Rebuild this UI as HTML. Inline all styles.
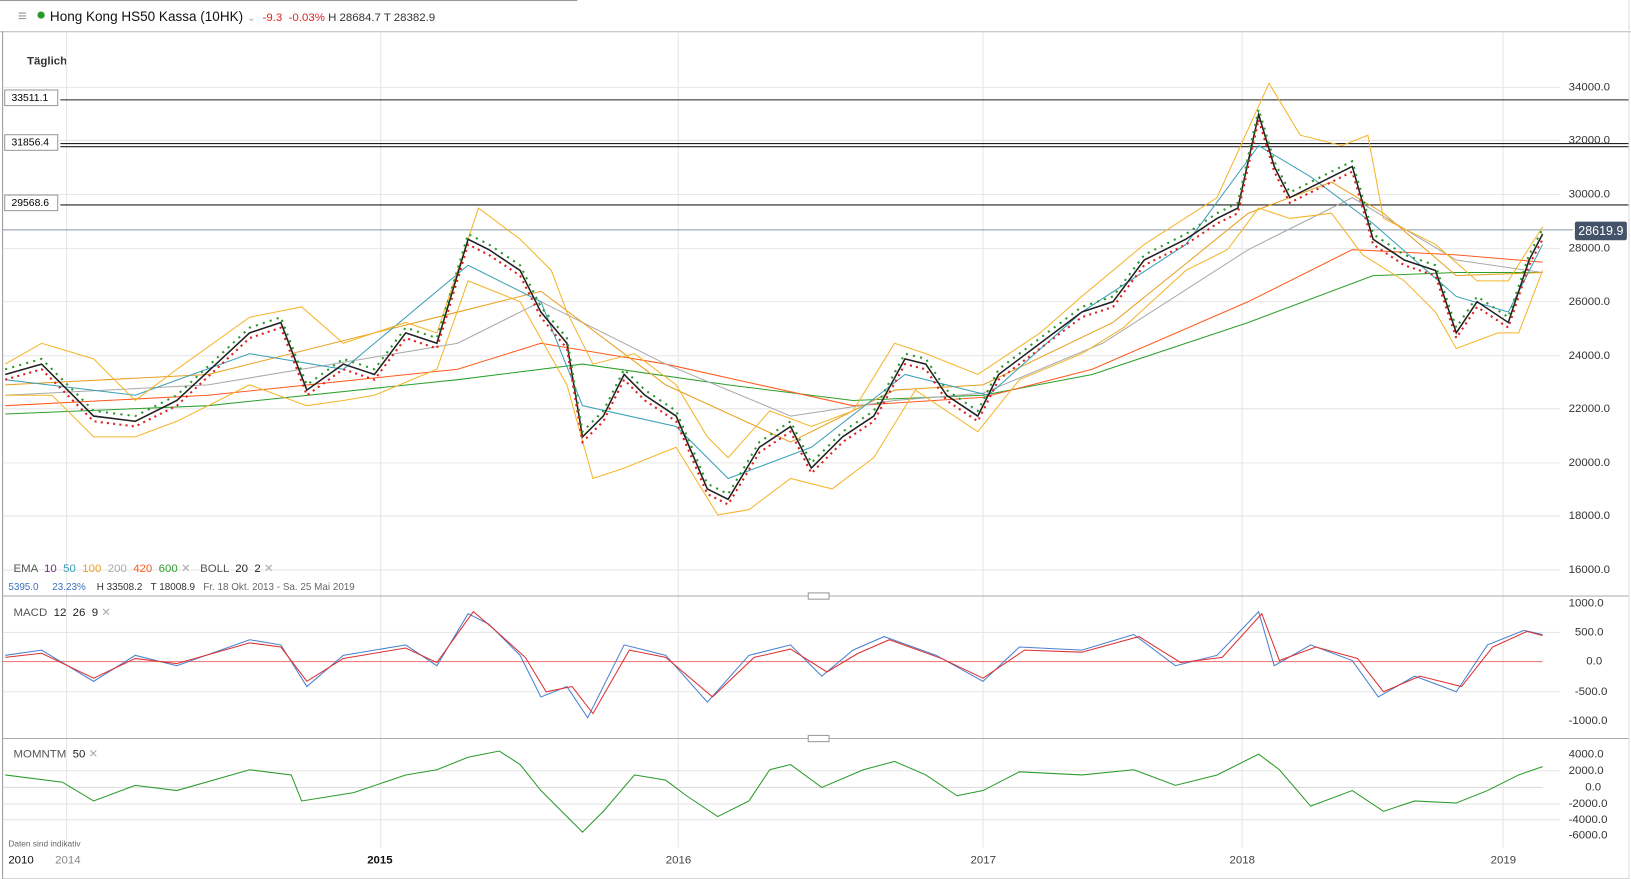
<!DOCTYPE html><html><head><style>
body{margin:0;width:1631px;height:879px;background:#fff;font-family:"Liberation Sans",sans-serif;overflow:hidden;position:relative}
#w{position:absolute;left:0;top:0;width:1568px;height:845px;transform:scale(1.0402);transform-origin:0 0}
.t{position:absolute;white-space:nowrap}
.ax{position:absolute;left:1508px;font-size:11px;color:#333}
.lbl{position:absolute;left:4px;width:52px;height:16px;border:1px solid #999;background:#fff;font-size:10px;line-height:16px;padding-left:6px;box-sizing:border-box}
</style></head><body><div id="w">
<div style="position:absolute;left:0;top:0;width:555px;height:1px;background:#999"></div>
<div style="position:absolute;left:0;top:30px;width:1568px;height:1px;background:#bbb"></div>
<div style="position:absolute;left:2px;top:30px;width:1px;height:815px;background:#999"></div>
<div class="t" style="left:17px;top:7px;font-size:15px;color:#999">≡</div>
<div class="t" style="left:36px;top:11px;width:7px;height:7px;border-radius:50%;background:#2a9a2a"></div>
<div class="t" style="left:48px;top:8px;font-size:13px;color:#111">Hong Kong HS50 Kassa (10HK) <span style="color:#aaa;font-size:10px">⌄</span> <span style="color:#d22;font-size:11px">&nbsp;-9.3 &nbsp;-0.03%</span><span style="font-size:11px;color:#333"> H 28684.7 T 28382.9</span></div>
<div class="t" style="left:26px;top:53px;font-size:11px;font-weight:bold;color:#333">Täglich</div>
<svg width="1568" height="845" style="position:absolute;left:0;top:0">
<g stroke="#e6e6e6" stroke-width="1">
<line x1="64" y1="31" x2="64" y2="815"/><line x1="366" y1="31" x2="366" y2="815"/><line x1="652" y1="31" x2="652" y2="815"/><line x1="945" y1="31" x2="945" y2="815"/><line x1="1194" y1="31" x2="1194" y2="815"/><line x1="1445" y1="31" x2="1445" y2="815"/>
<line x1="3" y1="84" x2="1500" y2="84"/><line x1="3" y1="135" x2="1500" y2="135"/><line x1="3" y1="187" x2="1500" y2="187"/><line x1="3" y1="239" x2="1500" y2="239"/><line x1="3" y1="290" x2="1500" y2="290"/><line x1="3" y1="342" x2="1500" y2="342"/><line x1="3" y1="393" x2="1500" y2="393"/><line x1="3" y1="445" x2="1500" y2="445"/><line x1="3" y1="496" x2="1500" y2="496"/><line x1="3" y1="548" x2="1500" y2="548"/>
<line x1="3" y1="608" x2="1500" y2="608"/><line x1="3" y1="665" x2="1500" y2="665"/><line x1="3" y1="741" x2="1500" y2="741"/><line x1="3" y1="773" x2="1500" y2="773"/><line x1="3" y1="788" x2="1500" y2="788"/>
</g>
<g stroke="#222" stroke-width="1"><line x1="58" y1="96" x2="1566" y2="96"/><line x1="58" y1="138" x2="1566" y2="138"/><line x1="58" y1="141" x2="1566" y2="141"/><line x1="58" y1="197" x2="1566" y2="197"/></g>
<line x1="3" y1="221" x2="1512" y2="221" stroke="#8a96a6"/>
<line x1="3" y1="573" x2="1566" y2="573" stroke="#aaa"/><line x1="3" y1="710" x2="1566" y2="710" stroke="#aaa"/>
<line x1="3" y1="845" x2="1566" y2="845" stroke="#aaa"/>
<line x1="1566" y1="0" x2="1566" y2="845" stroke="#ddd"/>
<rect x="777" y="570" width="20" height="6" fill="#fff" stroke="#999"/><rect x="777" y="707" width="20" height="6" fill="#fff" stroke="#999"/>
<polyline fill="none" stroke="#2ca02c" stroke-width="1" points="5,398 200,390 440,365 560,350 700,370 820,385 945,380 1050,360 1200,310 1320,265 1400,262 1483,262"/>
<polyline fill="none" stroke="#ff5a1e" stroke-width="1" points="5,390 200,380 440,355 520,330 640,350 820,390 945,382 1050,355 1200,290 1300,240 1400,245 1483,252"/>
<polyline fill="none" stroke="#aaa" stroke-width="1" points="5,380 200,370 440,330 520,290 640,350 760,400 860,385 945,378 1060,330 1200,240 1300,190 1400,250 1483,262"/>
<polyline fill="none" stroke="#e8a020" stroke-width="1" points="5,370 200,360 440,300 520,280 640,370 760,425 860,375 945,370 1070,310 1200,205 1280,175 1330,205 1400,265 1483,262"/>
<polyline fill="none" stroke="#3aa0b8" stroke-width="1" points="5,365 130,380 240,340 330,355 450,255 520,290 560,390 650,410 700,460 780,430 870,360 950,380 1040,300 1140,235 1210,140 1260,170 1320,215 1400,285 1450,300 1483,235"/>
<polyline fill="none" stroke="#f5b52a" stroke-width="1" points="5,350 40,330 90,345 130,385 170,355 240,305 290,295 330,330 390,310 420,320 460,200 500,230 530,260 545,300 570,350 610,340 650,370 680,420 700,440 740,395 780,410 820,395 860,330 890,340 940,360 1000,320 1040,285 1100,235 1170,190 1220,80 1250,130 1290,140 1315,130 1330,210 1380,235 1420,270 1450,270 1483,218"/>
<polyline fill="none" stroke="#f5b52a" stroke-width="1" points="5,380 50,380 90,420 130,420 170,405 240,370 295,390 330,385 360,380 420,355 450,270 500,290 545,370 570,460 600,450 650,430 690,495 720,490 760,460 800,470 840,440 880,375 940,415 980,365 1040,340 1080,315 1140,260 1180,240 1210,200 1240,210 1280,205 1310,245 1350,270 1380,300 1400,335 1440,320 1460,320 1483,260"/>
<polyline fill="none" stroke="#222" stroke-width="1.5" points="5,360 40,350 90,400 130,405 170,385 240,320 270,310 295,375 330,350 360,360 390,320 420,330 450,230 470,240 500,260 520,300 545,330 560,420 580,400 600,360 620,380 650,400 680,470 700,480 730,430 760,410 780,450 810,420 840,400 870,345 890,350 910,380 940,400 960,360 1000,330 1040,300 1070,290 1100,250 1140,230 1170,210 1190,200 1210,110 1225,160 1240,190 1270,175 1300,160 1320,230 1350,250 1380,260 1400,320 1420,290 1450,310 1470,250 1483,225"/>
<polyline fill="none" stroke="#e02020" stroke-width="2" stroke-dasharray="2,4" points="5,365 40,355 90,405 130,410 170,390 240,325 270,315 295,380 330,355 360,365 390,325 420,335 450,235 470,245 500,265 520,305 545,335 560,425 580,405 600,365 620,385 650,405 680,475 700,485 730,435 760,415 780,455 810,425 840,405 870,350 890,355 910,385 940,405 960,365 1000,335 1040,305 1070,295 1100,255 1140,235 1170,215 1190,205 1210,115 1225,165 1240,195 1270,180 1300,165 1320,235 1350,255 1380,265 1400,325 1420,295 1450,315 1470,255 1483,230"/>
<polyline fill="none" stroke="#2a9a2a" stroke-width="2" stroke-dasharray="2,5" points="5,355 40,345 90,395 130,400 170,380 240,315 270,305 295,370 330,345 360,355 390,315 420,325 450,225 470,235 500,255 520,295 545,325 560,415 580,395 600,355 620,375 650,395 680,465 700,475 730,425 760,405 780,445 810,415 840,395 870,340 890,345 910,375 940,395 960,355 1000,325 1040,295 1070,285 1100,245 1140,225 1170,205 1190,195 1210,105 1225,155 1240,185 1270,170 1300,155 1320,225 1350,245 1380,255 1400,315 1420,285 1450,305 1470,245 1483,220"/>
<line x1="3" y1="636" x2="1483" y2="636" stroke="#f08080"/>
<polyline fill="none" stroke="#4a80d0" stroke-width="1" points="5,630 40,625 90,655 130,630 170,640 240,615 270,620 295,660 330,630 390,620 420,640 450,590 470,600 500,630 520,670 545,660 565,690 600,620 640,630 680,675 720,630 760,620 790,650 820,625 850,612 900,630 945,655 980,622 1040,625 1090,610 1130,640 1170,630 1210,588 1225,640 1260,620 1300,635 1325,670 1360,650 1400,665 1430,620 1465,606 1483,610"/>
<polyline fill="none" stroke="#e03030" stroke-width="1" points="5,632 40,628 90,652 130,633 170,638 240,618 270,622 295,655 330,633 390,623 420,637 455,588 475,605 505,632 525,665 550,660 570,686 605,625 640,632 685,670 725,632 760,624 795,646 825,628 855,615 905,633 945,652 985,625 1040,627 1095,612 1135,637 1175,632 1213,590 1230,635 1265,622 1305,633 1330,665 1365,650 1405,660 1435,622 1468,607 1483,611"/>
<line x1="3" y1="757" x2="1483" y2="757" stroke="#ddd"/>
<polyline fill="none" stroke="#2a9a2a" stroke-width="1" points="5,745 60,752 90,770 130,755 170,760 240,740 280,745 290,770 340,762 390,745 420,740 450,728 480,722 500,735 520,760 540,780 560,800 580,780 610,745 640,750 660,765 690,785 720,770 740,740 760,735 790,757 830,740 860,732 890,745 920,765 945,760 980,742 1040,745 1090,740 1130,755 1170,745 1210,725 1230,740 1260,775 1300,760 1330,780 1360,770 1400,772 1430,760 1460,745 1483,737"/>
</svg>
<div class="lbl" style="top:86px">33511.1</div>
<div class="lbl" style="top:129px">31856.4</div>
<div class="lbl" style="top:187px">29568.6</div>
<div class="ax" style="top:78px">34000.0</div><div class="ax" style="top:129px">32000.0</div><div class="ax" style="top:181px">30000.0</div><div class="ax" style="top:233px">28000.0</div><div class="ax" style="top:284px">26000.0</div><div class="ax" style="top:336px">24000.0</div><div class="ax" style="top:387px">22000.0</div><div class="ax" style="top:439px">20000.0</div><div class="ax" style="top:490px">18000.0</div><div class="ax" style="top:542px">16000.0</div>
<div class="t" style="left:1514px;top:213px;width:50px;height:18px;background:#44536a;color:#fff;font-size:12px;line-height:18px;text-align:center;border-radius:2px">28619.9</div>
<div class="ax" style="top:574px">1000.0</div><div class="ax" style="top:602px;left:1514px">500.0</div><div class="ax" style="top:630px;left:1525px">0.0</div><div class="ax" style="top:659px;left:1514px">-500.0</div><div class="ax" style="top:687px">-1000.0</div>
<div class="ax" style="top:719px">4000.0</div><div class="ax" style="top:735px">2000.0</div><div class="ax" style="top:751px;left:1524px">0.0</div><div class="ax" style="top:767px">-2000.0</div><div class="ax" style="top:782px">-4000.0</div><div class="ax" style="top:797px">-6000.0</div>
<div class="t" style="left:13px;top:540px;font-size:11px;color:#555">EMA <span style="color:#7b2a8a">&nbsp;10</span> <span style="color:#3aa0b8">&nbsp;50</span> <span style="color:#e8a020">&nbsp;100</span> <span style="color:#aaa">&nbsp;200</span> <span style="color:#ff5a1e">&nbsp;420</span> <span style="color:#2ca02c">&nbsp;600</span> <span style="color:#aaa">✕</span> &nbsp;&nbsp;BOLL <span style="color:#222">&nbsp;20 &nbsp;2</span> <span style="color:#aaa">✕</span></div>
<div class="t" style="left:8px;top:559px;font-size:9.5px;color:#333"><span style="color:#3a70c0">5395.0 &nbsp;&nbsp;&nbsp;&nbsp;23.23%</span> &nbsp;&nbsp;&nbsp;H 33508.2 &nbsp;&nbsp;T 18008.9 &nbsp;&nbsp;<span style="color:#666">Fr. 18 Okt. 2013 - Sa. 25 Mai 2019</span></div>
<div class="t" style="left:13px;top:582px;font-size:11px;color:#555">MACD <span style="color:#222">&nbsp;12 &nbsp;26 &nbsp;9</span> <span style="color:#aaa">✕</span></div>
<div class="t" style="left:13px;top:718px;font-size:11px;color:#555">MOMNTM <span style="color:#222">&nbsp;50</span> <span style="color:#aaa">✕</span></div>
<div class="t" style="left:8px;top:807px;font-size:8px;color:#666">Daten sind indikativ</div>
<div class="t" style="left:8px;top:821px;font-size:11px;color:#111">2010</div>
<div class="t" style="left:53px;top:821px;font-size:11px;color:#888">2014</div>
<div class="t" style="left:353px;top:821px;font-size:11px;color:#111;font-weight:bold">2015</div>
<div class="t" style="left:640px;top:821px;font-size:11px;color:#444">2016</div>
<div class="t" style="left:933px;top:821px;font-size:11px;color:#444">2017</div>
<div class="t" style="left:1182px;top:821px;font-size:11px;color:#444">2018</div>
<div class="t" style="left:1433px;top:821px;font-size:11px;color:#444">2019</div>
</div></body></html>
